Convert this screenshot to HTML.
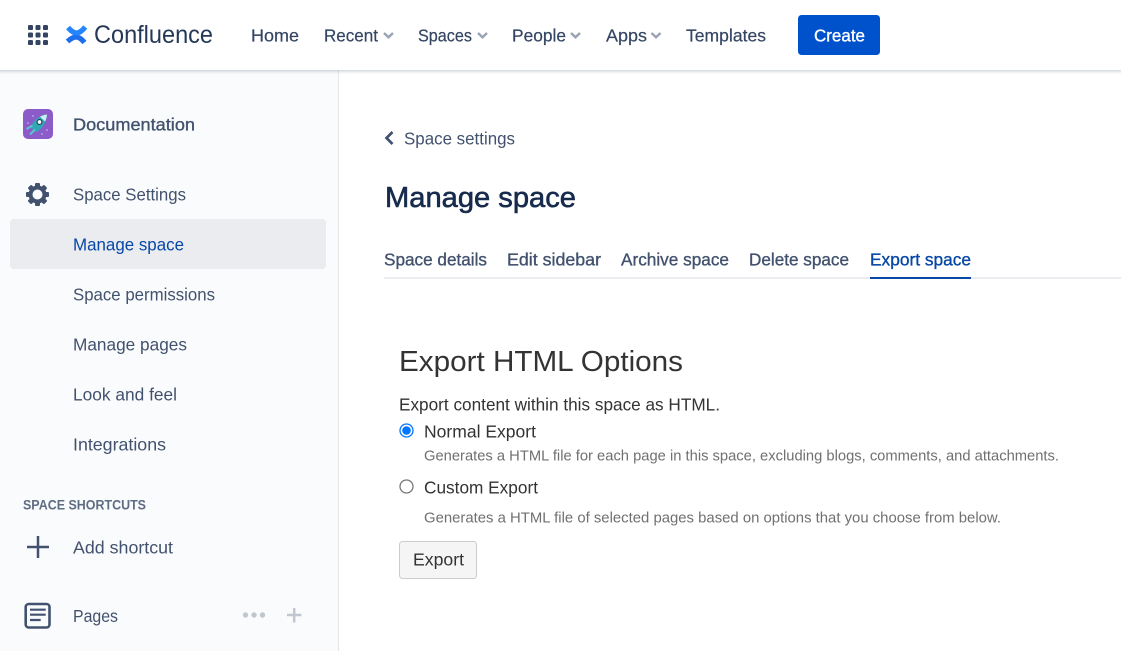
<!DOCTYPE html>
<html><head><meta charset="utf-8"><title>Manage space</title>
<style>
html,body{margin:0;padding:0;width:1121px;height:651px;overflow:hidden;background:#fff}
svg{position:absolute;left:0;top:0;display:block}
text{font-family:"Liberation Sans",sans-serif;font-size:17.5px}
.n{fill:#344563;stroke:#344563;stroke-width:.2}
.s{fill:#42526E}
.t{fill:#42526E;stroke:#42526E;stroke-width:.35}
.c{fill:#333}
.d{fill:#707070;font-size:14.6px}
</style></head><body>
<svg width="1121" height="651" viewBox="0 0 1121 651" xmlns="http://www.w3.org/2000/svg">
<defs><linearGradient id="sh" x1="0" y1="0" x2="0" y2="1"><stop offset="0" stop-color="#091e42" stop-opacity=".16"/><stop offset="1" stop-color="#091e42" stop-opacity="0"/></linearGradient></defs>
<rect x="0" y="70" width="338" height="581" fill="#FAFBFC"/>
<rect x="338" y="70" width="1" height="581" fill="#E4E6EA"/>
<rect x="0" y="70" width="1121" height="4" fill="url(#sh)"/>

<!-- grid -->
<g fill="#344563">
<rect x="28" y="25" width="5" height="5" rx="1.3"/><rect x="35.5" y="25" width="5" height="5" rx="1.3"/><rect x="43" y="25" width="5" height="5" rx="1.3"/>
<rect x="28" y="32.5" width="5" height="5" rx="1.3"/><rect x="35.5" y="32.5" width="5" height="5" rx="1.3"/><rect x="43" y="32.5" width="5" height="5" rx="1.3"/>
<rect x="28" y="40" width="5" height="5" rx="1.3"/><rect x="35.5" y="40" width="5" height="5" rx="1.3"/><rect x="43" y="40" width="5" height="5" rx="1.3"/>
</g>
<!-- logo -->
<path d="M67.500 41.500C70.500 38.800 73 37 76 37C79 37 82 39.500 84.500 42.500" fill="none" stroke="#1E6FEB" stroke-width="5.200"/>
<path d="M68 27.500C71 30.800 73.500 33 76.500 33C79.500 33 82.500 30.500 85.200 27" fill="none" stroke="#2684FF" stroke-width="5.200"/>
<text x="94" y="43" style="font-size:25px;fill:#253858" textLength="119" lengthAdjust="spacingAndGlyphs">Confluence</text>

<!-- nav -->
<text class="n" x="251" y="41.500" textLength="48" lengthAdjust="spacingAndGlyphs">Home</text>
<text class="n" x="324" y="41.500" textLength="54" lengthAdjust="spacingAndGlyphs">Recent</text>
<path d="M384 33l4.500 4.300 4.500-4.300" fill="none" stroke="#9AA4B5" stroke-width="2.500"/>
<text class="n" x="418" y="41.500" textLength="54" lengthAdjust="spacingAndGlyphs">Spaces</text>
<path d="M478 33l4.500 4.300 4.500-4.300" fill="none" stroke="#9AA4B5" stroke-width="2.500"/>
<text class="n" x="512" y="41.500" textLength="54" lengthAdjust="spacingAndGlyphs">People</text>
<path d="M571 33l4.500 4.300 4.500-4.300" fill="none" stroke="#9AA4B5" stroke-width="2.500"/>
<text class="n" x="606" y="41.500" textLength="41" lengthAdjust="spacingAndGlyphs">Apps</text>
<path d="M651.500 33l4.500 4.300 4.500-4.300" fill="none" stroke="#9AA4B5" stroke-width="2.500"/>
<text class="n" x="686" y="41.500" textLength="80" lengthAdjust="spacingAndGlyphs">Templates</text>
<rect x="798" y="15" width="82" height="40" rx="3.500" fill="#0052CC"/>
<text x="814" y="41.500" textLength="51" lengthAdjust="spacingAndGlyphs" style="fill:#fff;stroke:#fff;stroke-width:.35">Create</text>

<!-- sidebar -->
<rect x="23" y="109" width="30" height="30" rx="5" fill="#8B5BC9"/>
<g fill="#B79BE3"><circle cx="33" cy="116" r="1"/><circle cx="47" cy="130" r="1"/><circle cx="42" cy="134" r="1"/><circle cx="28" cy="123" r="1"/></g>
<path d="M47 114.500C41.500 115 37 117.500 34 121.500L30 127.500 36.500 132 40 129.500C44 126 46.500 120.500 47 114.500z" fill="#2FA7B5"/>
<path d="M47 114.500c-2.500.3-5 1-7 2.300l5 4.700c1.200-2 1.800-4.500 2-7z" fill="#C8F0F2"/>
<circle cx="39.500" cy="122" r="2.400" fill="#fff" stroke="#253858" stroke-width="1.100"/>
<path d="M26.500 129l6-3.500M30 134.500l5-5" stroke="#5CC4CF" stroke-width="2" fill="none"/>
<text class="t" x="73" y="130.500" textLength="122" lengthAdjust="spacingAndGlyphs">Documentation</text>

<g fill="#42526E">
<rect x="35" y="183" width="5" height="23" rx="1"/>
<rect x="35" y="183" width="5" height="23" rx="1" transform="rotate(45 37.500 194.500)"/>
<rect x="35" y="183" width="5" height="23" rx="1" transform="rotate(90 37.500 194.500)"/>
<rect x="35" y="183" width="5" height="23" rx="1" transform="rotate(135 37.500 194.500)"/>
</g>
<circle cx="37.500" cy="194.500" r="7" fill="#FAFBFC" stroke="#42526E" stroke-width="4"/>
<text class="s" x="73" y="200.500" textLength="113" lengthAdjust="spacingAndGlyphs">Space Settings</text>
<rect x="10" y="219" width="316" height="50" rx="4" fill="#EBECF0"/>
<text x="73" y="250.500" textLength="111" lengthAdjust="spacingAndGlyphs" style="fill:#0747A6">Manage space</text>
<text class="s" x="73" y="300.500" textLength="142" lengthAdjust="spacingAndGlyphs">Space permissions</text>
<text class="s" x="73" y="350.500" textLength="114" lengthAdjust="spacingAndGlyphs">Manage pages</text>
<text class="s" x="73" y="400.500" textLength="104" lengthAdjust="spacingAndGlyphs">Look and feel</text>
<text class="s" x="73" y="450.500" textLength="93" lengthAdjust="spacingAndGlyphs">Integrations</text>
<text x="23" y="509.500" textLength="123" lengthAdjust="spacingAndGlyphs" style="font-size:13.500px;font-weight:bold;fill:#5E6C84">SPACE SHORTCUTS</text>
<path d="M27 547h22M38 536v22" stroke="#42526E" stroke-width="2.500" fill="none"/>
<text class="s" x="73" y="553.500" textLength="100" lengthAdjust="spacingAndGlyphs">Add shortcut</text>
<rect x="25.700" y="604" width="23.800" height="23.500" rx="3" fill="none" stroke="#42526E" stroke-width="2.600"/>
<path d="M30 609.700h15.700M30 614.700h15.700M30 620h10.700" stroke="#42526E" stroke-width="2.200" fill="none"/>
<text class="s" x="73" y="622" textLength="45" lengthAdjust="spacingAndGlyphs">Pages</text>
<g fill="#C1C7D0"><circle cx="245.500" cy="615" r="2.700"/><circle cx="254" cy="615" r="2.700"/><circle cx="262.500" cy="615" r="2.700"/></g>
<path d="M287 615h14.500M294.200 608v14.500" stroke="#C1C7D0" stroke-width="2.500" fill="none"/>

<!-- main -->
<path d="M392.500 132l-6 6 6 6" fill="none" stroke="#42526E" stroke-width="2.700"/>
<text class="s" x="404" y="144.500" textLength="111" lengthAdjust="spacingAndGlyphs">Space settings</text>
<text x="385" y="207" textLength="191" lengthAdjust="spacingAndGlyphs" style="font-size:29px;fill:#172B4D;stroke:#172B4D;stroke-width:.6">Manage space</text>

<text class="t" x="384" y="265.500" textLength="103" lengthAdjust="spacingAndGlyphs">Space details</text>
<text class="t" x="507" y="265.500" textLength="94" lengthAdjust="spacingAndGlyphs">Edit sidebar</text>
<text class="t" x="621" y="265.500" textLength="108" lengthAdjust="spacingAndGlyphs">Archive space</text>
<text class="t" x="749" y="265.500" textLength="100" lengthAdjust="spacingAndGlyphs">Delete space</text>
<text x="870" y="265.500" textLength="101" lengthAdjust="spacingAndGlyphs" style="fill:#0747A6;stroke:#0747A6;stroke-width:.35">Export space</text>
<rect x="384" y="277" width="737" height="2" fill="#EBECF0"/>
<rect x="870" y="277" width="101" height="2" fill="#0747A6"/>

<text x="399" y="371" textLength="284" lengthAdjust="spacingAndGlyphs" style="font-size:29px;fill:#333">Export HTML Options</text>
<text class="c" x="399" y="410.500" textLength="321" lengthAdjust="spacingAndGlyphs">Export content within this space as HTML.</text>
<circle cx="406.500" cy="430.500" r="6.500" fill="#fff" stroke="#0075FF" stroke-width="1.300"/>
<circle cx="406.500" cy="430.500" r="4.300" fill="#0075FF"/>
<text class="c" x="424" y="437.500" textLength="112" lengthAdjust="spacingAndGlyphs">Normal Export</text>
<text class="d" x="424" y="460.500" textLength="635" lengthAdjust="spacingAndGlyphs">Generates a HTML file for each page in this space, excluding blogs, comments, and attachments.</text>
<circle cx="406.500" cy="486.500" r="6.500" fill="#fff" stroke="#767676" stroke-width="1.300"/>
<text class="c" x="424" y="493.500" textLength="114" lengthAdjust="spacingAndGlyphs">Custom Export</text>
<text class="d" x="424" y="522.500" textLength="577" lengthAdjust="spacingAndGlyphs">Generates a HTML file of selected pages based on options that you choose from below.</text>
<rect x="399.500" y="541.500" width="77" height="37" rx="3" fill="#F5F5F5" stroke="#CCCCCC"/>
<text class="c" x="413" y="565.500" textLength="51" lengthAdjust="spacingAndGlyphs">Export</text>
</svg>
</body></html>
